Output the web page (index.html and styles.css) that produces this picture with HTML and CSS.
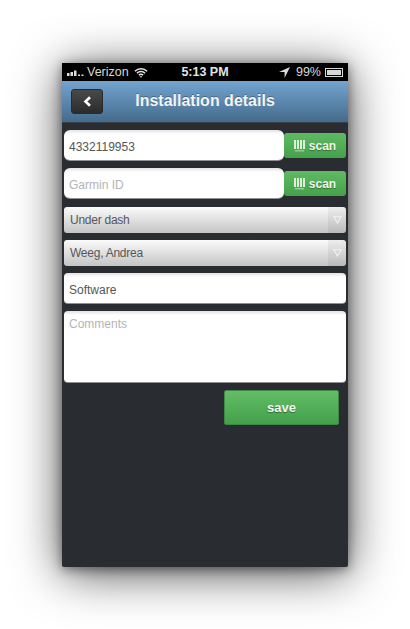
FILE: index.html
```html
<!DOCTYPE html>
<html lang="en">
<head>
<meta charset="utf-8">
<title>Installation details</title>
<link rel="stylesheet" href="styles.css">
</head>
<body>
<div class="phone">
  <div class="status">
    <div class="status-left">
      <svg class="signal" width="20" height="7" viewBox="0 0 20 7"><path fill="#dcdcdc" d="M0 4h2.500v3H0zM3.500 3H6v4H3.500zM7 1.500h2.500V7H7zM11 5.500h2V7h-2zM14.500 5.500h2V7h-2z"/></svg>
      <span>Verizon</span>
      <svg class="wifi" width="14" height="11" viewBox="0 0 15 11"><path fill="none" stroke="#e6e6e6" stroke-width="1.700" d="M1 4.200a9.200 9.200 0 0 1 13 0M3.200 6.300a6 6 0 0 1 8.600 0M5.300 8.300a3 3 0 0 1 4.400 0"/><path fill="#e6e6e6" d="M7.500 11 6 9.500h3z"/></svg>
    </div>
    <div class="status-time">5:13 PM</div>
    <div class="status-right">
      <svg class="location" width="11" height="11" viewBox="0 0 11 11"><path fill="#dcdcdc" d="M11 0 0 5h5.600v6z"/></svg>
      <span>99%</span>
      <div class="battery"><div class="battery-fill"></div></div>
    </div>
  </div>
  <div class="nav">
    <button class="back"><svg width="9" height="11" viewBox="0 0 9 11"><path fill="none" stroke="#fff" stroke-width="2.600" d="M7 1.200 2.500 5.500 7 9.800"/></svg></button>
    <h1>Installation details</h1>
  </div>
  <form class="form">
    <div class="scan-row">
      <div class="field">4332119953</div>
      <button type="button" class="scan"><svg class="barcode" width="11" height="12" viewBox="0 0 11 12"><path fill="#dcefd8" d="M0 0h2v9H0zM3 0h2v9H3zM6 0h2v9H6zM9 0h2v9H9z"/><path fill="#dcefd8" opacity=".5" d="M1 10h9v1.500H1z"/></svg>scan</button>
    </div>
    <div class="scan-row second">
      <div class="field hint">Garmin ID</div>
      <button type="button" class="scan"><svg class="barcode" width="11" height="12" viewBox="0 0 11 12"><path fill="#dcefd8" d="M0 0h2v9H0zM3 0h2v9H3zM6 0h2v9H6zM9 0h2v9H9z"/><path fill="#dcefd8" opacity=".5" d="M1 10h9v1.500H1z"/></svg>scan</button>
    </div>
    <div class="select"><span>Under dash</span><i class="arrow"><svg width="9" height="8" viewBox="0 0 9 8"><path fill="none" stroke="#eee" stroke-width="1.300" d="M.8.700h7.400L4.500 7z"/></svg></i></div>
    <div class="select"><span>Weeg, Andrea</span><i class="arrow"><svg width="9" height="8" viewBox="0 0 9 8"><path fill="none" stroke="#eee" stroke-width="1.300" d="M.8.700h7.400L4.500 7z"/></svg></i></div>
    <div class="field wide">Software</div>
    <div class="field wide comments hint">Comments</div>
    <button type="button" class="save">save</button>
  </form>
</div>
</body>
</html>
```
FILE: styles.css
```css
html, body {
  height: 100%;
}
body {
  margin: 0;
  padding: 63px 62px 0;
  box-sizing: border-box;
  background: #fff;
  font-family: "Liberation Sans", Arial, sans-serif;
  overflow: hidden;
}
.phone {
  width: 286px;
  height: 504px;
  background: #292c30;
  box-shadow: 0 2px 12px rgba(0, 0, 0, 0.45), 0 6px 48px rgba(0, 0, 0, 0.7);
  border-radius: 2px;
}
.status {
  height: 18px;
  background: #000;
  color: #d8d8d8;
  font-size: 12.5px;
  display: grid;
  grid-template-columns: 1fr auto 1fr;
  align-items: center;
  padding: 0 5px;
}
.status-left {
  display: flex;
  align-items: center;
  gap: 2px;
}
.signal {
  margin-right: -2px;
}
.wifi {
  margin-left: 3px;
}
.status-time {
  font-weight: bold;
  color: #e4e4e4;
}
.status-right {
  display: flex;
  justify-content: flex-end;
  align-items: center;
  gap: 3px;
}
.location {
  margin-right: 3px;
}
.battery {
  width: 14px;
  height: 5px;
  border: 1px solid #d8d8d8;
  padding: 1px;
  margin-left: 1px;
}
.battery-fill {
  height: 100%;
  background: #d8d8d8;
}
.nav {
  height: 41px;
  display: flex;
  align-items: center;
  background: linear-gradient(#72a4d0, #456b8b);
  border-bottom: 1px solid #3a4048;
  padding-left: 9px;
}
.nav h1 {
  margin: 0 0 2px;
  flex: 1;
  padding-right: 41px;
  color: #f2f5f8;
  font-size: 16px;
  text-align: center;
  text-shadow: 0 -1px 0 rgba(0, 0, 0, 0.3);
}
.back {
  width: 32px;
  height: 25px;
  padding: 0;
  border: 1px solid #2a2a2a;
  border-radius: 3px;
  background: linear-gradient(#4a4a4a, #2b2b2b);
  display: flex;
  align-items: center;
  justify-content: center;
}
.form {
  padding: 7px 2px 0;
  display: flex;
  flex-direction: column;
}
.scan-row {
  display: flex;
  align-items: center;
  margin-bottom: 7px;
}
.scan-row.second {
  margin-bottom: 8px;
}
.field {
  box-sizing: border-box;
  height: 31px;
  background: linear-gradient(#e2e2e2, #fff 4px);
  border-radius: 6px;
  border-bottom: 1px solid #8e9094;
  color: #555;
  font-size: 12px;
  line-height: 34px;
  padding-left: 5px;
}
.scan-row .field {
  width: 220px;
}
.hint {
  color: #b4b4b4;
}
.scan {
  width: 62px;
  height: 25px;
  padding: 0;
  border: 0;
  border-radius: 3px;
  background: linear-gradient(#5fbb62, #46a04c);
  color: #eef7ec;
  font-family: inherit;
  font-size: 12px;
  font-weight: bold;
  display: flex;
  align-items: center;
  justify-content: center;
  gap: 4px;
  text-shadow: 0 1px 1px rgba(0, 0, 0, 0.35);
}
.select {
  height: 26px;
  margin-bottom: 7px;
  border-radius: 3px;
  background: linear-gradient(#fbfbfb, #c4c4c4);
  display: flex;
  align-items: center;
  justify-content: space-between;
  color: #55575b;
  font-size: 12px;
  letter-spacing: -0.25px;
  padding-left: 6px;
  overflow: hidden;
}
.arrow {
  width: 18px;
  height: 100%;
  background: rgba(0, 0, 0, 0.05);
  display: flex;
  align-items: center;
  justify-content: center;
}
.wide {
  margin-bottom: 7px;
  border-radius: 4px;
}
.comments {
  height: 72px;
  line-height: 26px;
}
.save {
  align-self: flex-end;
  width: 115px;
  height: 35px;
  margin-right: 7px;
  border: 1px solid #3e8a44;
  border-radius: 2px;
  background: linear-gradient(#62bd66, #45a04c);
  color: #f2f8f0;
  font-family: inherit;
  font-size: 13px;
  font-weight: bold;
  text-shadow: 0 1px 1px rgba(0, 0, 0, 0.4);
}
```
